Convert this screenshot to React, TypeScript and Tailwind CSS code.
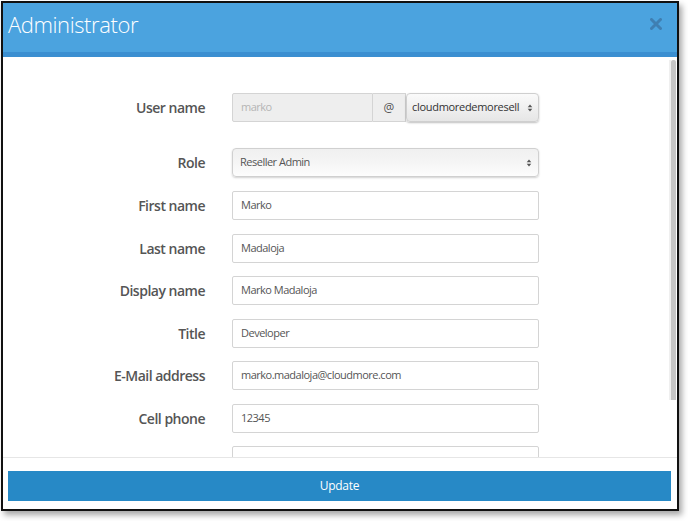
import React from "react";

const font = { fontFamily: '"Open Sans", "Liberation Sans", sans-serif' };

function Label({ children }: { children: React.ReactNode }) {
  return (
    <div className="w-[202px] shrink-0 text-right text-[14px] font-semibold tracking-[-0.5px] text-[#555]">
      {children}
    </div>
  );
}

function TextInput({ value }: { value: string }) {
  return (
    <div className="ml-[27px] flex h-[29px] w-[307px] items-center rounded-[2px] border border-[#d4d4d4] bg-white pl-[8px] text-[11px] tracking-[-0.5px] text-[#555]">
      {value}
    </div>
  );
}

function Arrows() {
  return (
    <svg width="6" height="10" viewBox="0 0 6 10" className="shrink-0">
      <path d="M3 1.5 L5.3 4.3 L0.7 4.3 Z" fill="#555" />
      <path d="M3 8.5 L5.3 5.7 L0.7 5.7 Z" fill="#555" />
    </svg>
  );
}

export default function App() {
  const rows: { label: string; value: string; mt: string }[] = [
    { label: "First name", value: "Marko", mt: "mt-[14px]" },
    { label: "Last name", value: "Madaloja", mt: "mt-[14px]" },
    { label: "Display name", value: "Marko Madaloja", mt: "mt-[13px]" },
    { label: "Title", value: "Developer", mt: "mt-[14px]" },
    { label: "E-Mail address", value: "marko.madaloja@cloudmore.com", mt: "mt-[13px]" },
    { label: "Cell phone", value: "12345", mt: "mt-[14px]" },
    { label: "", value: "", mt: "mt-[13px]" },
  ];
  return (
    <div className="h-[521px] w-[688px] overflow-hidden bg-white pl-[1px] pt-[1px]" style={font}>
      <div className="flex h-[510px] w-[678px] flex-col border-2 border-[#111] bg-white shadow-[3px_4px_6px_rgba(0,0,0,0.35)]">
        {/* header */}
        <div className="flex h-[49px] shrink-0 items-center justify-between bg-[#4ba3df] pb-[7px] pl-[5px] pr-[15px]">
          <div className="text-[22px] font-light leading-none tracking-[-0.4px] text-white">Administrator</div>
          <svg width="12" height="12" viewBox="0 0 12 12">
            <path d="M1.5 1.5 L10.5 10.5 M10.5 1.5 L1.5 10.5" stroke="#3f7fb2" strokeWidth="3" strokeLinecap="round" />
          </svg>
        </div>
        <div className="h-[5px] shrink-0 bg-[#3b8fd1]" />

        {/* body */}
        <div className="relative h-[400px] shrink-0 overflow-hidden">
          <div className="flex flex-col pt-[36px]">
            {/* user name */}
            <div className="flex items-center">
              <Label>User name</Label>
              <div className="ml-[27px] flex h-[29px] w-[307px]">
                <div className="flex w-[141px] shrink-0 items-center rounded-l-[2px] border border-[#d4d4d4] bg-[#eee] pl-[8px] text-[11px] tracking-[-0.5px] text-[#b5b5b5]">
                  marko
                </div>
                <div className="flex w-[33px] shrink-0 items-center justify-center border-y border-r border-[#d4d4d4] bg-[#eee] text-[12px] text-[#555]">
                  @
                </div>
                <div className="flex min-w-0 flex-1 items-center justify-between rounded-[4px] border border-[#cfcfcf] bg-gradient-to-b from-[#fafafa] to-[#e6e6e6] pl-[5px] pr-[5px] text-[11px] tracking-[-0.3px] text-[#333] shadow-[0_1px_2px_rgba(0,0,0,0.25)]">
                  <span className="whitespace-nowrap">cloudmoredemoresell</span>
                  <Arrows />
                </div>
              </div>
            </div>
            {/* role */}
            <div className="mt-[26px] flex items-center">
              <Label>Role</Label>
              <div className="ml-[27px] flex h-[29px] w-[307px] items-center justify-between rounded-[4px] border border-[#d0d0d0] bg-gradient-to-b from-[#f0f0f0] via-[#f5f5f5] to-[#fdfdfd] pl-[7px] pr-[6px] text-[11px] tracking-[-0.5px] text-[#555] shadow-[0_1px_2px_rgba(0,0,0,0.18)]">
                <span>Reseller Admin</span>
                <Arrows />
              </div>
            </div>
            {rows.map((r, i) => (
              <div key={i} className={`${r.mt} flex items-center`}>
                <Label>{r.label}</Label>
                <TextInput value={r.value} />
              </div>
            ))}
          </div>
          {/* scrollbar */}
          <div className="absolute right-[1px] top-[3px] flex h-[340px] w-[7px]">
            <div className="w-[2px] bg-[#efefef]" />
            <div className="flex-1 rounded-t-[2px] bg-[#c6c6c6]" />
          </div>
        </div>

        {/* footer */}
        <div className="flex-1 border-t border-[#e6e6e6] pl-[5px] pr-[6px] pt-[13px]">
          <div className="flex h-[30px] items-center justify-center bg-[#2789c6] text-[12px] tracking-[-0.3px] text-white">
            Update
          </div>
        </div>
      </div>
    </div>
  );
}
